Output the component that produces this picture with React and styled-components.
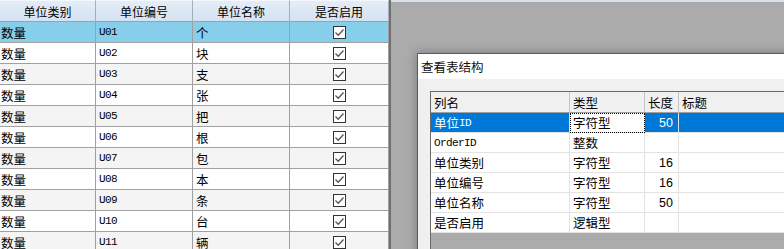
import React from 'react';
import styled, { createGlobalStyle } from 'styled-components';

// Data

const units = [
  ['数量', 'U01', '个'],
  ['数量', 'U02', '块'],
  ['数量', 'U03', '支'],
  ['数量', 'U04', '张'],
  ['数量', 'U05', '把'],
  ['数量', 'U06', '根'],
  ['数量', 'U07', '包'],
  ['数量', 'U08', '本'],
  ['数量', 'U09', '条'],
  ['数量', 'U10', '台'],
  ['数量', 'U11', '辆'],
];

const fields = [
  ['单位ID', '字符型', '50'],
  ['OrderID', '整数', ''],
  ['单位类别', '字符型', '16'],
  ['单位编号', '字符型', '16'],
  ['单位名称', '字符型', '50'],
  ['是否启用', '逻辑型', ''],
];

//Markup

// latin runs get the narrow mono face, chinese stays in the cell font
function MixedText({ text }) {
  const parts = text.match(/[\x00-\x7f]+|[^\x00-\x7f]+/g) || [];
  return parts.map((part, i) =>
    /^[\x00-\x7f]+$/.test(part) ? <Latin key={i}>{part}</Latin> : <span key={i}>{part}</span>
  );
}

function Check() {
  return (
    <CheckBox>
      <svg width="11" height="11" viewBox="0 0 11 11">
        <polyline points="1.5,5.5 4.2,8.2 9.5,2.5" fill="none" stroke="#555" strokeWidth="1.3" />
      </svg>
    </CheckBox>
  );
}

export default function App() {
  return (
    <>
      <GlobalStyle />
      <Screen>
        <UnitGrid>
          <HeadCell>单位类别</HeadCell>
          <HeadCell>单位编号</HeadCell>
          <HeadCell>单位名称</HeadCell>
          <HeadCell>是否启用</HeadCell>
          {units.map((u, i) => {
            const tone = i === 0 ? 'selected' : i % 2 === 0 ? 'alt' : 'plain';
            return (
              <React.Fragment key={u[1]}>
                <Cell tone={tone} first>{u[0]}</Cell>
                <Cell tone={tone}>
                  <MixedText text={u[1]} />
                </Cell>
                <Cell tone={tone}>{u[2]}</Cell>
                <Cell tone={tone} center>
                  <Check />
                </Cell>
              </React.Fragment>
            );
          })}
        </UnitGrid>
        <Workspace>
          <Dialog>
            <TitleBar>查看表结构</TitleBar>
            <DialogBody>
              <FieldGrid>
                <FieldHead>列名</FieldHead>
                <FieldHead>类型</FieldHead>
                <FieldHead>长度</FieldHead>
                <FieldHead>标题</FieldHead>
                {fields.map((f, i) => (
                  <React.Fragment key={f[0]}>
                    <FieldCell selected={i === 0}>
                      <MixedText text={f[0]} />
                    </FieldCell>
                    <FieldCell current={i === 0}>{f[1]}</FieldCell>
                    <FieldCell selected={i === 0} right>{f[2]}</FieldCell>
                    <FieldCell selected={i === 0}></FieldCell>
                  </React.Fragment>
                ))}
              </FieldGrid>
            </DialogBody>
          </Dialog>
        </Workspace>
      </Screen>
    </>
  );
}

// Style

const GlobalStyle = createGlobalStyle`
  html, body {
    margin: 0;
    padding: 0;
  }
  body {
    font-family: "Noto Sans CJK SC", sans-serif;
    font-size: 12px;
    color: #000;
    background: #ababab;
  }
`;

const Screen = styled.div`
  display: flex;
  width: 784px;
  height: 249px;
  overflow: hidden;
`;

const Latin = styled.span`
  font-family: "Liberation Mono", "DejaVu Sans Mono", monospace;
  font-size: 11px;
  letter-spacing: -0.6px;
`;

const UnitGrid = styled.div`
  flex: none;
  width: 389px;
  display: grid;
  grid-template-columns: 96px 97px 97px 99px;
  grid-template-rows: 22px;
  grid-auto-rows: 21px;
  align-content: start;
  background: #fff;
  border-right: 2px solid #707070;
`;

const HeadCell = styled.div`
  box-sizing: border-box;
  display: flex;
  align-items: center;
  justify-content: center;
  background: linear-gradient(#e4edf8, #d6e2f1);
  border-right: 1px solid #a3aebd;
  border-bottom: 1px solid #a0a0a0;
  border-top: 1px solid #f4f8fc;
  font-size: 12px;
`;

const toneColors = {
  selected: '#87ceeb',
  alt: '#f4f4f4',
  plain: '#ffffff',
};

const Cell = styled.div`
  box-sizing: border-box;
  display: flex;
  align-items: center;
  justify-content: ${(p) => (p.center ? 'center' : 'flex-start')};
  padding: 0 ${(p) => (p.first ? '1px' : '3px')};
  background: ${(p) => toneColors[p.tone]};
  border-right: 1px solid #a0a0a0;
  border-bottom: 1px solid #a0a0a0;
  font-size: 12.5px;
  white-space: nowrap;
`;

const CheckBox = styled.span`
  box-sizing: border-box;
  display: flex;
  align-items: center;
  justify-content: center;
  width: 13px;
  height: 13px;
  border: 1px solid #333;
  background: #fff;
`;

const Workspace = styled.div`
  flex: 1;
  min-width: 0;
  display: flex;
  align-items: flex-start;
  padding: 51px 0 0 26px;
  background: #ababab;
  border-top: 2px solid #d8e0ea;
  overflow: hidden;
`;

const Dialog = styled.div`
  flex: none;
  width: 420px;
  height: 220px;
  display: flex;
  flex-direction: column;
  background: #f0f0f0;
  border: 1px solid #5a5a5a;
  border-right: none;
  box-shadow: 0 0 10px rgba(0, 0, 0, 0.3);
`;

const TitleBar = styled.div`
  height: 25px;
  line-height: 25px;
  padding-left: 3px;
  background: #fff;
  font-size: 12.5px;
  color: #111;
`;

const DialogBody = styled.div`
  flex: 1;
  display: flex;
  padding: 12px 0 0 12px;
`;

const FieldGrid = styled.div`
  flex: 1;
  display: grid;
  grid-template-columns: 139px 75px 34px 1fr;
  grid-template-rows: 21px;
  grid-auto-rows: 20px;
  align-content: start;
  background: #ababab;
  border-top: 1px solid #6a6a6a;
  border-left: 1px solid #6a6a6a;
`;

const FieldHead = styled.div`
  box-sizing: border-box;
  display: flex;
  align-items: center;
  padding: 0 3px;
  background: #f0f0f0;
  border-right: 1px solid #c4c4c4;
  border-bottom: 1px solid #a0a0a0;
  font-size: 12.5px;
`;

const FieldCell = styled.div`
  box-sizing: border-box;
  display: flex;
  align-items: center;
  justify-content: ${(p) => (p.right ? 'flex-end' : 'flex-start')};
  padding: 0 ${(p) => (p.right ? '5px' : '3px')};
  background: ${(p) => (p.selected ? '#0078d7' : '#fff')};
  color: ${(p) => (p.selected ? '#fff' : '#000')};
  border-right: 1px solid #e3e3e3;
  border-bottom: 1px solid #e3e3e3;
  outline: ${(p) => (p.current ? '1px dotted #000' : 'none')};
  outline-offset: -1px;
  font-family: ${(p) => (p.right ? '"Liberation Sans", sans-serif' : '"Noto Sans CJK SC", sans-serif')};
  font-size: 12.5px;
  white-space: nowrap;
`;
